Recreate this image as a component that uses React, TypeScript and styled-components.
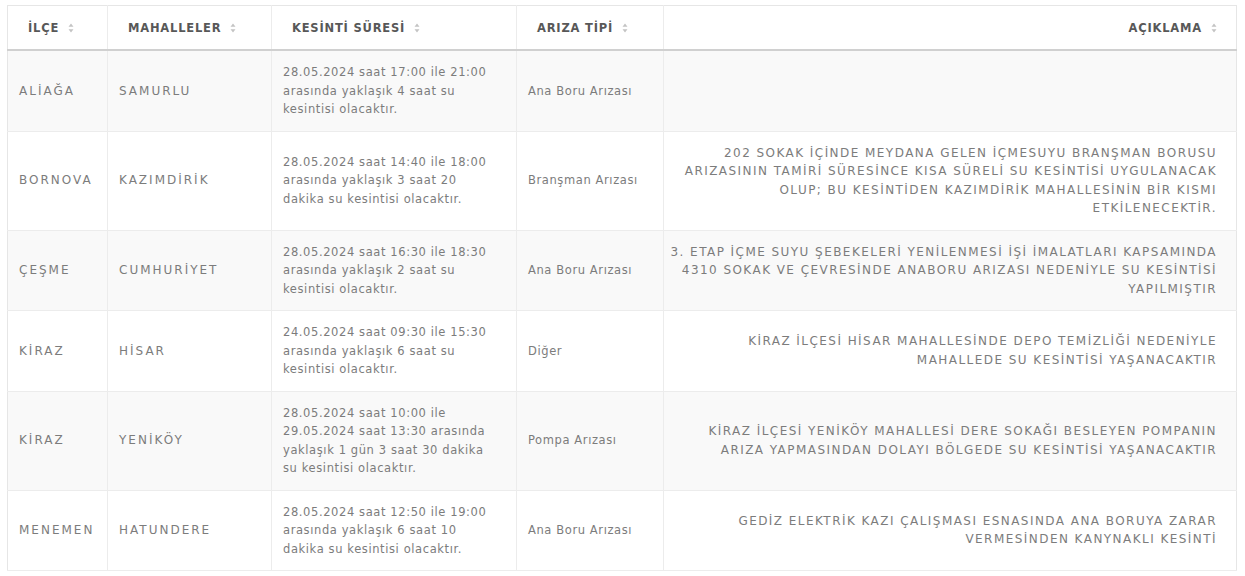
import React from "react";
import styled, { createGlobalStyle } from "styled-components";

const Global = createGlobalStyle`
  html, body { margin: 0; padding: 0; background: #ffffff; }
  body { font-family: "DejaVu Sans", "Open Sans", sans-serif; }
`;

const Page = styled.div`
  padding: 5px 8px 0 7px;
`;

const Table = styled.table`
  width: 1230px;
  border-collapse: collapse;
  table-layout: fixed;
  border-top: 1px solid #e6e6e6;
  border-left: 1px solid #e6e6e6;
  border-right: 1px solid #e6e6e6;
`;

const Th = styled.th<{ $align?: "left" | "right" }>`
  height: 42px;
  padding: 1px 8px 0 20px;
  text-align: ${(p) => p.$align ?? "left"};
  font-size: 11.5px;
  font-weight: 700;
  letter-spacing: 0.8px;
  color: #585858;
  border-right: 1px solid #ececec;
  border-bottom: 2px solid #d0d0d0;
  white-space: nowrap;
  &:last-child { border-right: none; padding-right: 19px; }
`;

const SortIcon = styled.svg`
  margin-left: 9px;
  vertical-align: -1px;
`;

const Tr = styled.tr<{ $odd: boolean }>`
  background: ${(p) => (p.$odd ? "#f9f9f9" : "#ffffff")};
`;

type Kind = "short" | "text" | "desc";

const Td = styled.td<{ $kind: Kind }>`
  padding: ${(p) =>
    p.$kind === "desc" ? "12px 19px 12px 0" : p.$kind === "short" ? "12px 8px 12px 11px" : "12px 20px 12px 11px"};
  vertical-align: middle;
  text-align: ${(p) => (p.$kind === "desc" ? "right" : "left")};
  font-size: ${(p) => (p.$kind === "text" ? "11.5px" : "12px")};
  letter-spacing: ${(p) => (p.$kind === "short" ? "2px" : p.$kind === "desc" ? "1.45px" : "0.6px")};
  line-height: 18.5px;
  color: #7c7c7c;
  border-right: 1px solid #ececec;
  border-bottom: 1px solid #ececec;
  &:last-child { border-right: none; }
`;

const Sort = () => (
  <SortIcon width="6" height="10" viewBox="0 0 6 10">
    <path d="M3 0.5 L5.5 3.8 H0.5 Z M3 9.5 L5.5 6.2 H0.5 Z" fill="#c4c4c4" />
  </SortIcon>
);

type Row = { ilce: string; mah: string; sure: string; tip: string; aciklama: string };

const rows: Row[] = [
  {
    ilce: "ALİAĞA",
    mah: "SAMURLU",
    sure: "28.05.2024 saat 17:00 ile 21:00 arasında yaklaşık 4 saat su kesintisi olacaktır.",
    tip: "Ana Boru Arızası",
    aciklama: "",
  },
  {
    ilce: "BORNOVA",
    mah: "KAZIMDİRİK",
    sure: "28.05.2024 saat 14:40 ile 18:00 arasında yaklaşık 3 saat 20 dakika su kesintisi olacaktır.",
    tip: "Branşman Arızası",
    aciklama:
      "202 SOKAK İÇİNDE MEYDANA GELEN İÇMESUYU BRANŞMAN BORUSU ARIZASININ TAMİRİ SÜRESİNCE KISA SÜRELİ SU KESİNTİSİ UYGULANACAK OLUP; BU KESİNTİDEN KAZIMDİRİK MAHALLESİNİN BİR KISMI ETKİLENECEKTİR.",
  },
  {
    ilce: "ÇEŞME",
    mah: "CUMHURİYET",
    sure: "28.05.2024 saat 16:30 ile 18:30 arasında yaklaşık 2 saat su kesintisi olacaktır.",
    tip: "Ana Boru Arızası",
    aciklama:
      "3. ETAP İÇME SUYU ŞEBEKELERİ YENİLENMESİ İŞİ İMALATLARI KAPSAMINDA 4310 SOKAK VE ÇEVRESİNDE ANABORU ARIZASI NEDENİYLE SU KESİNTİSİ YAPILMIŞTIR",
  },
  {
    ilce: "KİRAZ",
    mah: "HİSAR",
    sure: "24.05.2024 saat 09:30 ile 15:30 arasında yaklaşık 6 saat su kesintisi olacaktır.",
    tip: "Diğer",
    aciklama: "KİRAZ İLÇESİ HİSAR MAHALLESİNDE DEPO TEMİZLİĞİ NEDENİYLE MAHALLEDE SU KESİNTİSİ YAŞANACAKTIR",
  },
  {
    ilce: "KİRAZ",
    mah: "YENİKÖY",
    sure: "28.05.2024 saat 10:00 ile 29.05.2024 saat 13:30 arasında yaklaşık 1 gün 3 saat 30 dakika su kesintisi olacaktır.",
    tip: "Pompa Arızası",
    aciklama:
      "KİRAZ İLÇESİ YENİKÖY MAHALLESİ DERE SOKAĞI BESLEYEN POMPANIN ARIZA YAPMASINDAN DOLAYI BÖLGEDE SU KESİNTİSİ YAŞANACAKTIR",
  },
  {
    ilce: "MENEMEN",
    mah: "HATUNDERE",
    sure: "28.05.2024 saat 12:50 ile 19:00 arasında yaklaşık 6 saat 10 dakika su kesintisi olacaktır.",
    tip: "Ana Boru Arızası",
    aciklama: "GEDİZ ELEKTRİK KAZI ÇALIŞMASI ESNASINDA ANA BORUYA ZARAR VERMESİNDEN KANYNAKLI KESİNTİ",
  },
];

export default function App() {
  return (
    <Page>
      <Global />
      <Table>
        <colgroup>
          <col style={{ width: 100 }} />
          <col style={{ width: 164 }} />
          <col style={{ width: 245 }} />
          <col style={{ width: 147 }} />
          <col />
        </colgroup>
        <thead>
          <tr>
            <Th>İLÇE<Sort /></Th>
            <Th>MAHALLELER<Sort /></Th>
            <Th>KESİNTİ SÜRESİ<Sort /></Th>
            <Th>ARIZA TİPİ<Sort /></Th>
            <Th $align="right">AÇIKLAMA<Sort /></Th>
          </tr>
        </thead>
        <tbody>
          {rows.map((r, i) => (
            <Tr key={i} $odd={i % 2 === 0}>
              <Td $kind="short">{r.ilce}</Td>
              <Td $kind="short">{r.mah}</Td>
              <Td $kind="text">{r.sure}</Td>
              <Td $kind="text">{r.tip}</Td>
              <Td $kind="desc">{r.aciklama}</Td>
            </Tr>
          ))}
        </tbody>
      </Table>
    </Page>
  );
}
